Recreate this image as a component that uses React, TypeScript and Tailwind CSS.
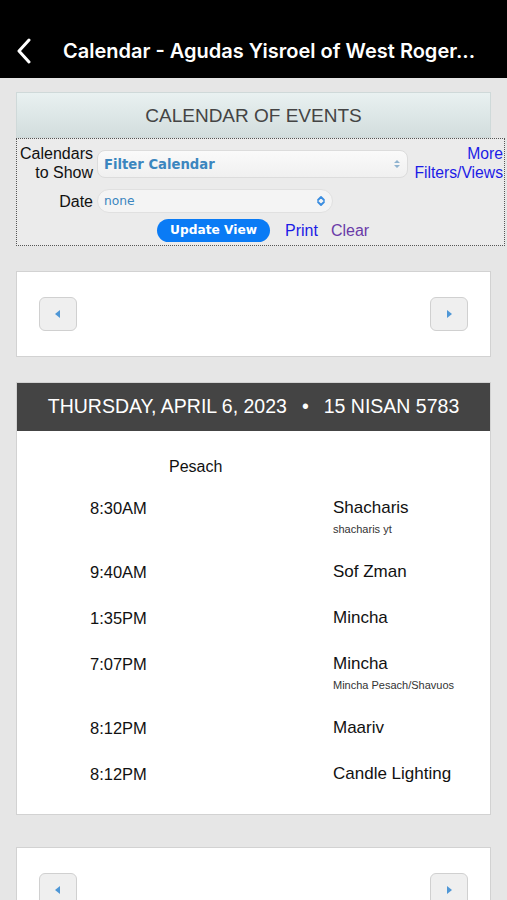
import React from "react";

function NavCard({ last }: { last?: boolean }) {
  return (
    <div className={`mx-4 bg-white border border-[#d2d2d2] flex justify-between px-[22px] pt-[25px] ${last ? "pb-[40px]" : "pb-[25px]"}`}>
      <button className="w-[38px] h-[34px] rounded-[6px] bg-[#efefef] border border-[#d0d0d0] flex items-center justify-center">
        <svg width="6" height="8" viewBox="0 0 6 8"><path d="M5 0 L0 4 L5 8 Z" fill="#4f97d6" /></svg>
      </button>
      <button className="w-[38px] h-[34px] rounded-[6px] bg-[#efefef] border border-[#d0d0d0] flex items-center justify-center">
        <svg width="6" height="8" viewBox="0 0 6 8"><path d="M1 0 L6 4 L1 8 Z" fill="#4f97d6" /></svg>
      </button>
    </div>
  );
}

const events = [
  { time: "8:30AM", title: "Shacharis", sub: "shacharis yt" },
  { time: "9:40AM", title: "Sof Zman" },
  { time: "1:35PM", title: "Mincha" },
  { time: "7:07PM", title: "Mincha", sub: "Mincha Pesach/Shavuos" },
  { time: "8:12PM", title: "Maariv" },
  { time: "8:12PM", title: "Candle Lighting" },
];

export default function App() {
  const sans = { fontFamily: '"Liberation Sans", Arial, sans-serif' };
  const dv = { fontFamily: '"DejaVu Sans", Verdana, sans-serif' };
  return (
    <div className="h-[900px] bg-[#e6e6e6] overflow-hidden" style={sans}>
      <div className="h-[78px] bg-black flex items-end pb-[14px]">
        <svg width="16" height="26" viewBox="0 0 16 26" className="ml-[16px]">
          <path d="M13 2 L3 13 L13 24" fill="none" stroke="white" strokeWidth="3" strokeLinecap="round" strokeLinejoin="round" />
        </svg>
        <div className="ml-[31px] text-white text-[20px] font-semibold leading-[26px] whitespace-nowrap" style={{ fontFamily: 'Inter, "Liberation Sans", sans-serif' }}>
          Calendar - Agudas Yisroel of West Roger...
        </div>
      </div>

      <div className="mt-[14px] ml-4 w-[475px] h-[46px] border border-[#cfd9d9] bg-gradient-to-b from-[#e9f1f1] to-[#d2dddd] flex items-center justify-center text-[19px] text-[#444] leading-none">
        CALENDAR OF EVENTS
      </div>

      <div className="ml-4 w-[489px] h-[108px] border border-dotted border-[#555] bg-[#ebebeb] text-[16px] leading-[19px] text-[#111]">
        <div className="flex items-start mt-[5px]">
          <div className="w-[76px] text-right">Calendars<br />to Show</div>
          <div className="ml-[4px] mt-[6px] w-[311px] h-[28px] rounded-[8px] border border-[#dcdcdc] bg-gradient-to-b from-[#fafafa] to-[#f0f0f0] flex items-center justify-between pl-[6px] pr-[6px]">
            <span className="text-[13.2px] font-bold text-[#3b86bf]" style={dv}>Filter Calendar</span>
            <svg width="8" height="10" viewBox="0 0 8 10"><path d="M1 4 L4 1 L7 4 Z M1 6 L4 9 L7 6 Z" fill="#8fb3cf" /></svg>
          </div>
          <div className="ml-auto mr-[1px] text-right text-[15.7px] text-[#1c1ce6]">More<br />Filters/Views</div>
        </div>
        <div className="flex items-center mt-[7px]">
          <div className="w-[76px] text-right">Date</div>
          <div className="ml-[4px] w-[236px] h-[24px] rounded-[12px] border border-[#e0e0e0] bg-[#f4f4f4] flex items-center justify-between pl-[6px] pr-[6px]">
            <span className="text-[12.3px] text-[#3b86bf]" style={dv}>none</span>
            <svg width="10" height="12" viewBox="0 0 10 12"><path d="M2 5 L5 2 L8 5 M2 7 L5 10 L8 7" fill="none" stroke="#3a8de0" strokeWidth="1.8" strokeLinecap="round" strokeLinejoin="round" /></svg>
          </div>
        </div>
        <div className="flex items-center mt-[6px]">
          <button className="ml-[140px] w-[113px] h-[23px] rounded-full bg-[#0a7bf5] text-white text-[12.2px] font-bold leading-none" style={dv}>Update View</button>
          <span className="ml-[15px] text-[#1c1ce6]">Print</span>
          <span className="ml-[13px] text-[#6a3aa8]">Clear</span>
        </div>
      </div>

      <div className="mt-[25px]">
        <NavCard />
      </div>

      <div className="mt-[25px] mx-4 bg-white border border-[#d2d2d2]">
        <div className="h-[48px] bg-[#444] flex items-center justify-center text-white text-[19.5px] leading-none whitespace-nowrap">
          THURSDAY, APRIL 6, 2023<span className="mx-[15px]">•</span>15 NISAN 5783
        </div>
        <div className="pl-[152px] pt-[26px] text-[16px] leading-[20px] text-[#111]">Pesach</div>
        <div className="pt-[21px] pb-[4px]">
          {events.map((e, i) => (
            <div key={i} className={`flex pl-[73px] ${e.sub ? "h-[64px]" : "h-[46px]"}`}>
              <div className="w-[243px] text-[16.5px] leading-[20px] text-[#111]">{e.time}</div>
              <div>
                <div className="text-[17px] leading-[20px] text-[#111]">{e.title}</div>
                {e.sub && <div className="mt-[4px] text-[11px] leading-[14px] text-[#333]">{e.sub}</div>}
              </div>
            </div>
          ))}
        </div>
      </div>

      <div className="mt-[32px]">
        <NavCard last />
      </div>
    </div>
  );
}
